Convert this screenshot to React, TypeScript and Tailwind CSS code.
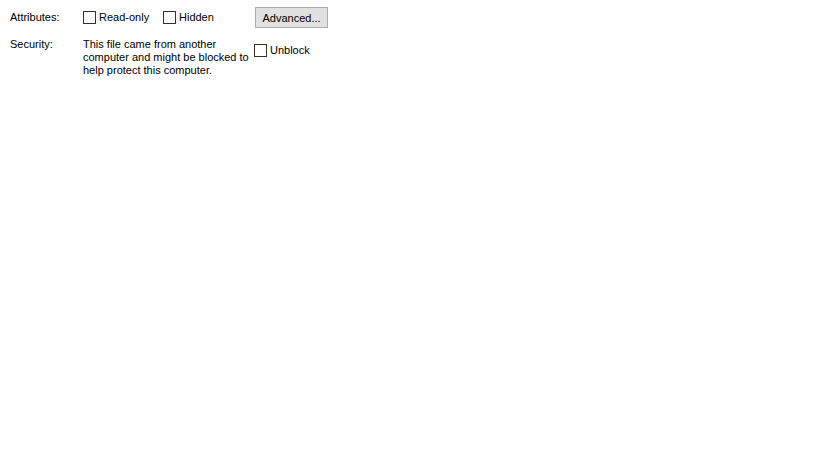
import React from "react";

function Check({ label }: { label: string }) {
  return (
    <label className="flex items-center gap-[3px]">
      <span className="w-[13px] h-[13px] border border-[#333333] bg-white"></span>
      <span>{label}</span>
    </label>
  );
}

export default function App() {
  return (
    <div
      className="w-[819px] h-[460px] bg-white text-[11px] leading-[13px] text-black"
      style={{ fontFamily: '"Liberation Sans", Arial, sans-serif' }}
    >
      <div className="flex flex-col pl-[10px] pt-[7px]">
        {/* Attributes row */}
        <div className="flex items-center h-[21px]">
          <div className="w-[73px]">Attributes:</div>
          <div className="w-[80px]">
            <Check label="Read-only" />
          </div>
          <div className="w-[92px]">
            <Check label="Hidden" />
          </div>
          <button className="w-[73px] h-[21px] pt-[1px] border border-[#adadad] bg-[#e1e1e1] text-[11px]">
            Advanced...
          </button>
        </div>

        {/* Security row */}
        <div className="flex mt-[10px]">
          <div className="w-[73px]">Security:</div>
          <div className="w-[171px]">
            This file came from another computer and might be blocked to help protect this computer.
          </div>
          <div className="pt-[6px]">
            <Check label="Unblock" />
          </div>
        </div>
      </div>
    </div>
  );
}
